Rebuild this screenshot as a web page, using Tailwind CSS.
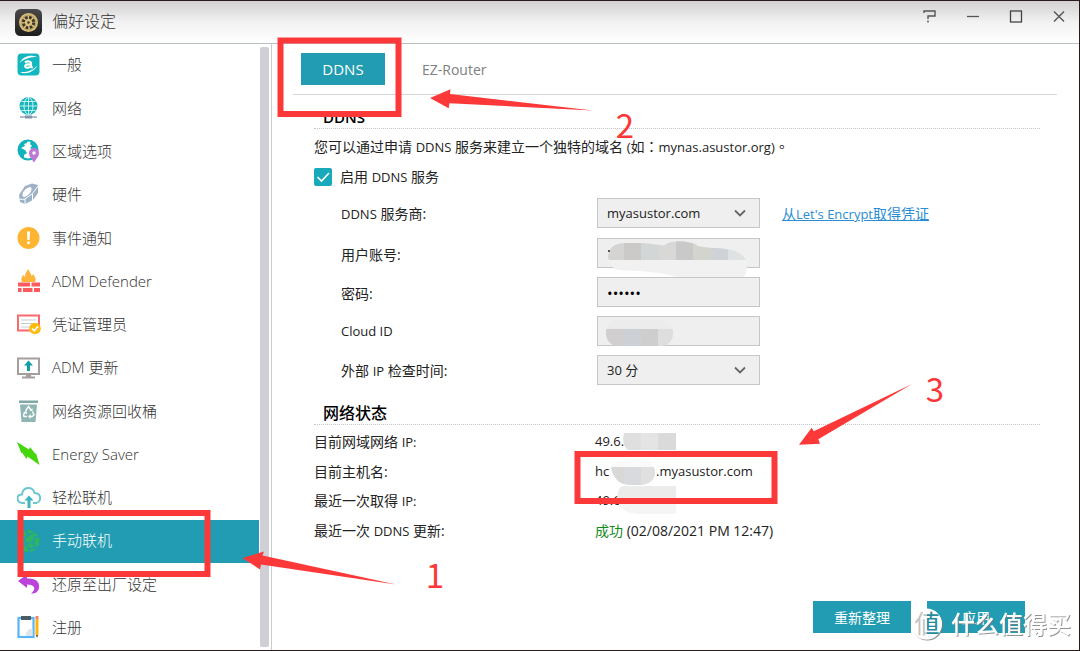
<!DOCTYPE html>
<html lang="zh-CN">
<head>
<meta charset="utf-8">
<title>偏好设定</title>
<script src="https://cdn.jsdelivr.net/npm/@tailwindcss/browser@4"></script>
</head>
<body class="relative flex min-h-screen flex-col border-t border-r border-b border-[#2a1a1c] bg-white font-['Open_Sans','Noto_Sans_CJK_SC',sans-serif] text-[14px] text-[#222]">

<header class="flex h-[43px] shrink-0 items-center border-b border-[#b9c0c3] bg-linear-to-b from-[#d2d0d1] via-[#f3f2f2] to-white pl-[15px]">
  <svg class="h-[27px] w-[27px]" viewBox="0 0 27 27">
    <defs><linearGradient id="dk" x1="0" y1="0" x2="0" y2="1"><stop offset="0" stop-color="#4a4a4a"/><stop offset="1" stop-color="#1d1d1d"/></linearGradient></defs>
    <rect width="27" height="27" rx="5.500" fill="url(#dk)"/>
    <circle cx="13.500" cy="13.500" r="9.500" fill="#d9bf7b"/>
    <circle cx="13.500" cy="13.500" r="5.200" fill="none" stroke="#3a342a" stroke-width="3" stroke-dasharray="2.600 1.480"/>
    <circle cx="13.500" cy="13.500" r="7.500" fill="none" stroke="#8d7c50" stroke-width=".5"/>
    <circle cx="13.500" cy="13.500" r="1.200" fill="#3a342a"/>
  </svg>
  <h1 class="ml-[10px] flex-1 pb-0.5 text-[16px] font-light text-[#333]">偏好设定</h1>
  <div class="mr-[13px] mb-3 flex gap-[29px]">
    <button type="button" aria-label="帮助"><svg class="h-[14px] w-[14px]" viewBox="0 0 14 14" fill="none" stroke="#555" stroke-width="1.400"><path d="M1 4V2H12V7H5V10M5 11.500V13.500"/></svg></button>
    <button type="button" aria-label="最小化"><svg class="h-[14px] w-[14px]" viewBox="0 0 14 14" stroke="#555" stroke-width="1.300"><path d="M1 7.500H13"/></svg></button>
    <button type="button" aria-label="最大化"><svg class="h-[14px] w-[14px]" viewBox="0 0 14 14" fill="none" stroke="#444" stroke-width="1.300"><rect x="1.500" y="2" width="11" height="11"/></svg></button>
    <button type="button" aria-label="关闭"><svg class="h-[14px] w-[14px]" viewBox="0 0 14 14" stroke="#555" stroke-width="1.400"><path d="M2 2.500L12 12.500M12 2.500L2 12.500"/></svg></button>
  </div>
</header>

<div class="flex flex-1">
  <nav class="flex w-[259px] shrink-0 flex-col text-[15px] font-light text-[#333]">
    <a href="#" class="flex flex-1 items-center gap-[11px] pb-0.5 pl-[17px]"><svg class="h-6 w-6" viewBox="0 0 24 24"><rect x=".5" y=".5" width="22" height="22" rx="4" fill="#12b7c0"/><path d="M2.500 10C6 3 14 1 20 4C14 4 8 5 2.500 10ZM20.500 12.500C17 19 9 22 3 19C10 19.500 15 18 20.500 12.500Z" fill="#fff"/><path d="M8 9.500C10 8 14 8 14 10.500V13.500L15.500 15M13.500 11.500C9 11 7.500 12.500 8.500 14C9.500 15.500 13 14.500 14 13" fill="none" stroke="#fff" stroke-width="2.200"/></svg>一般</a>
    <a href="#" class="flex flex-1 items-center gap-[11px] pb-0.5 pl-[17px]"><svg class="h-6 w-6" viewBox="0 0 24 24"><circle cx="11.500" cy="10" r="9" fill="#15b5bd"/><g fill="none" stroke="#d7f5f6" stroke-width=".9"><ellipse cx="11.500" cy="10" rx="4.500" ry="8.500"/><path d="M11.500 1V19M3 10H20M4.500 5.500H18.500M4.500 14.500H18.500"/></g><path d="M3 21H20" stroke="#8fa0b4" stroke-width="1.400"/><path d="M8 19.500H15V22.500H8Z" fill="#8494aa"/></svg>网络</a>
    <a href="#" class="flex flex-1 items-center gap-[11px] pb-0.5 pl-[17px]"><svg class="h-6 w-6" viewBox="0 0 24 24"><circle cx="11" cy="11" r="9.500" fill="#fff" stroke="#12b3bb" stroke-width="2"/><path d="M2 7C4 3 7 1 11 1L10 4L7 5L8 7L4 9L8 11L10 14L7 16V20C3 17 1 12 2 7ZM14 2C18 3 20 6 21 10L17 11L13 9L15 7L13 5Z" fill="#12b3bb"/><path d="M17 23.500C14 19 12 17 12 14A5 5 0 0 1 22 14C22 17 20 19 17 23.500Z" fill="#bd79d3"/><circle cx="17" cy="14" r="1.700" fill="#fff"/></svg>区域选项</a>
    <a href="#" class="flex flex-1 items-center gap-[11px] pb-0.5 pl-[17px]"><svg class="h-6 w-6" viewBox="0 0 24 24"><path d="M2 13L8 4L15 1.500L21 3V11L16 18L8 22L3 20Z" fill="#9db2c7"/><ellipse cx="10" cy="10" rx="6" ry="3" transform="rotate(-48 10 10)" fill="#fff"/><path d="M2.500 17.500L8 17L15.500 11.500L21 4M8 17V22.500M15.500 11.500V18.500" fill="none" stroke="#fff" stroke-width="1"/></svg>硬件</a>
    <a href="#" class="flex flex-1 items-center gap-[11px] pb-0.5 pl-[17px]"><svg class="h-6 w-6" viewBox="0 0 24 24"><circle cx="11.500" cy="12" r="11" fill="#ffb432"/><path d="M10 5.500H13L12.600 14H10.400Z" fill="#fff"/><circle cx="11.500" cy="16.800" r="1.500" fill="#fff"/></svg>事件通知</a>
    <a href="#" class="flex flex-1 items-center gap-[11px] pb-0.5 pl-[17px]"><svg class="h-6 w-6" viewBox="0 0 24 24"><path d="M5 13C3.500 10 5 8 6 6L8 8C8 5 9 3 11.500 0C12 3 14 4 14.500 7L16.500 5C17 8 20 9 18 13Z" fill="#ffb43a"/><path d="M1 13.500H13V17.500H1ZM14.500 13.500H23V17.500H14.500ZM1 19H4.500V23H1ZM6 19H15.500V23H6ZM17 19H23V23H17Z" fill="#fb5a5e"/></svg>ADM Defender</a>
    <a href="#" class="flex flex-1 items-center gap-[11px] pb-0.5 pl-[17px]"><svg class="h-6 w-6" viewBox="0 0 24 24"><rect x="1" y="3.500" width="21" height="15" fill="#fff" stroke="#f96a6c" stroke-width="2"/><path d="M4 8H19M4 11.500H16M4 15H13" stroke="#c8cbd0" stroke-width="1.200"/><circle cx="18" cy="16.500" r="5.800" fill="#fdbb0c"/><path d="M15 16.500L17.300 18.800L21 14.500" fill="none" stroke="#fff" stroke-width="1.700"/></svg>凭证管理员</a>
    <a href="#" class="flex flex-1 items-center gap-[11px] pb-0.5 pl-[17px]"><svg class="h-6 w-6" viewBox="0 0 24 24"><rect x="1" y="2.500" width="21" height="15.500" fill="#fff" stroke="#a59e9c" stroke-width="2"/><path d="M9 18H14V20.500H18V22.500H5V20.500H9Z" fill="#a59e9c"/><path d="M11.500 4.500L16 9.500H13V15H10V9.500H7Z" fill="#109da3"/></svg>ADM 更新</a>
    <a href="#" class="flex flex-1 items-center gap-[11px] pb-0.5 pl-[17px]"><svg class="h-6 w-6" viewBox="0 0 24 24"><path d="M2 1.500H21V4H2Z" fill="#7fa7a4"/><path d="M3 5.500H20L18.500 23H4.500Z" fill="#8fb6b2"/><path d="M8.500 12L11.500 7.500L14 11M15.500 12.500L17 16L15 17.500H12.500M10 17.500H7L6.500 16L8 13" fill="none" stroke="#fff" stroke-width="1.400"/><path d="M12.500 12H15.500V9ZM13.500 15V20L11 17.500ZM6 13.500L9.500 12L10 15Z" fill="#fff"/></svg>网络资源回收桶</a>
    <a href="#" class="flex flex-1 items-center gap-[11px] pb-0.5 pl-[17px]"><svg class="h-6 w-6" viewBox="0 0 24 24"><path d="M0 0L12 7.500L13 5L18.500 12L19 11L22.500 23L10.500 14.500L9.500 17L5 10.500L4.500 11.500Z" fill="#45d60b"/></svg>Energy Saver</a>
    <a href="#" class="flex flex-1 items-center gap-[11px] pb-0.5 pl-[17px]"><svg class="h-6 w-6" viewBox="0 0 24 24" fill="none"><path d="M8 18H5C-1 17 -1 9.500 5 9.500C6 1 16 1 17.500 8C24.500 8 25 17 19 18H16" stroke="#6cc6cf" stroke-width="2"/><path d="M12 23V13" stroke="#3bb5bf" stroke-width="3"/><path d="M7.500 15.500L12 10.500L16.500 15.500Z" fill="#3bb5bf"/></svg>轻松联机</a>
    <a href="#" aria-current="page" class="flex flex-1 items-center gap-[11px] bg-[#219cb2] pb-0.5 pl-[17px] text-white"><svg class="h-6 w-6" viewBox="0 0 24 24"><circle cx="11.500" cy="12" r="11" fill="#2db563"/><path d="M8 1L12 6L18 3M12 6L7 9L2 6M7 9L9 15L3 19M9 15L16 13L18 8L23 7M16 13L18 19L23 17M9 15L12 20L18 19M12 20V24" fill="none" stroke="#219cb2" stroke-width="1.500"/></svg>手动联机</a>
    <a href="#" class="flex flex-1 items-center gap-[11px] pb-0.5 pl-[17px]"><svg class="h-6 w-6" viewBox="0 0 24 24"><path d="M1 9L10 2.500V6.500C19 6 23 10 22 16C21 20 18 22 14 21.500C19 18 19 12.500 10 12.500V16Z" fill="#bb43dc"/></svg>还原至出厂设定</a>
    <a href="#" class="flex flex-1 items-center gap-[11px] pb-0.5 pl-[17px]"><svg class="h-6 w-6" viewBox="0 0 24 24"><rect x="1.500" y="3" width="15" height="19" fill="#fff" stroke="#5ab4fa" stroke-width="2.200"/><path d="M4 1H14V5H4Z" fill="#4d5d66"/><path d="M9 18L12 14H15.500V21H9Z" fill="#dfe6eb"/><path d="M18.500 4H21.500V19L20 22.500L18.500 19Z" fill="#fdb50b"/><path d="M18.500 1H21.500V4H18.500Z" fill="#e8875f"/><path d="M19 20H21L20 23Z" fill="#574a42"/></svg>注册</a>
  </nav>
  <div class="my-[3px] ml-px w-[9px] shrink-0 rounded-xs bg-[#cfcfd5]"></div>

  <main class="ml-[2px] flex min-w-0 flex-1 flex-col border-l border-[#c9cdd0]">
    <div role="tablist" class="mr-[22px] ml-[21px] flex border-b border-[#d4d7da] px-2 py-[9px] text-[15px]">
      <button type="button" role="tab" aria-selected="true" class="h-8 w-[84px] bg-[#219cb2] text-white">DDNS</button>
      <button type="button" role="tab" aria-selected="false" class="ml-4 px-[21px] text-[14px] text-[#808080]">EZ-Router</button>
    </div>

    <form class="flex flex-1 flex-col pl-[42px]">
      <section class="mr-[39px]">
        <h2 class="border-b border-dotted border-[#c3c5cc] pt-3 pl-[9px] text-[15px] leading-[21px] font-semibold text-black">DDNS</h2>
        <p class="mt-[6px] leading-[22px] whitespace-nowrap">您可以通过申请 <span class="text-[13px]">DDNS</span> 服务来建立一个独特的域名 <span class="text-[13px]">(</span>如<span lang="zh-TW" class="font-['Noto_Sans_CJK_TC',sans-serif]">：</span><span class="text-[13px]">mynas.asustor.org)</span><span lang="zh-TW" class="font-['Noto_Sans_CJK_TC',sans-serif]">。</span></p>
        <div class="mt-2 flex h-[22px] items-center">
          <span class="relative h-[18px] w-[18px]"><input id="enable" type="checkbox" checked class="block h-[18px] w-[18px] appearance-none rounded-xs bg-[#18a9bb]"><svg class="pointer-events-none absolute inset-0" viewBox="0 0 18 18" fill="none" stroke="#fff" stroke-width="1.600"><path d="M3.500 9L7.500 13L15 5"/></svg></span>
          <label for="enable" class="ml-2">启用 <span class="text-[13px]">DDNS</span> 服务</label>
        </div>

        <div class="mt-[10px] grid grid-cols-[256px_163px_1fr] items-center gap-y-[9px] pl-[27px]">
          <label for="provider" class="pt-0.5"><span class="text-[13px]">DDNS</span> 服务商:</label>
          <div class="relative"><select id="provider" class="block h-[30px] w-full appearance-none border border-[#c6c6c6] bg-[#efefef] px-[9px] pt-0.5 text-[13px]"><option>myasustor.com</option></select><svg class="pointer-events-none absolute top-[9px] right-[14px] h-3 w-3" viewBox="0 0 12 12" fill="none" stroke="#666" stroke-width="1.800"><path d="M1 3.500L6 8.500L11 3.500"/></svg></div>
          <a href="#" class="ml-[22px] pt-0.5 text-[#2a8cd2] underline">从<span class="text-[13px]">Let's Encrypt</span>取得凭证</a>

          <label for="account" class="mt-px pt-0.5">用户账号:</label>
          <input id="account" type="text" class="mt-px h-[30px] w-full border border-[#c6c6c6] bg-[#efefef] px-[9px] text-[13px]"><i></i>

          <label for="pw" class="pt-0.5">密码:</label>
          <input id="pw" type="password" value="123456" class="h-[30px] w-full border border-[#c6c6c6] bg-[#efefef] px-[9px] pt-0.5 text-[15px] text-black"><i></i>

          <label for="cloud" class="pt-0.5 text-[13px]">Cloud ID</label>
          <input id="cloud" type="text" class="h-[30px] w-full border border-[#c6c6c6] bg-[#efefef] px-[9px] text-[13px]"><i></i>

          <label for="interval" class="pt-0.5">外部 <span class="text-[13px]">IP</span> 检查时间:</label>
          <div class="relative"><select id="interval" class="block h-[30px] w-full appearance-none border border-[#c6c6c6] bg-[#efefef] px-[9px] pt-0.5 text-[13px]"><option>30 分</option></select><svg class="pointer-events-none absolute top-[9px] right-[14px] h-3 w-3" viewBox="0 0 12 12" fill="none" stroke="#666" stroke-width="1.800"><path d="M1 3.500L6 8.500L11 3.500"/></svg></div>
        </div>
      </section>

      <section class="mt-[18px] mr-[39px]">
        <h2 class="border-b border-dotted border-[#c3c5cc] pl-[9px] text-[16px] leading-[21px] font-medium text-black">网络状态</h2>
        <dl class="mt-0.5 grid grid-cols-[281px_1fr] leading-[29px]">
          <dt>目前网域网络 <span class="text-[13px]">IP:</span></dt><dd class="text-[13px]">49.6.</dd>
          <dt>目前主机名:</dt><dd class="flex text-[13px]"><span class="w-[61px]">hc</span>.myasustor.com</dd>
          <dt>最近一次取得 <span class="text-[13px]">IP:</span></dt><dd class="text-[13px]">49.6</dd>
          <dt>最近一次 <span class="text-[13px]">DDNS</span> 更新:</dt><dd><span class="text-[#128a1c]">成功</span> (02/08/2021 PM 12:47)</dd>
        </dl>
      </section>

      <div class="mt-auto mr-[54px] mb-[17px] flex justify-end gap-4 text-white">
        <button type="button" class="h-8 w-[98px] bg-[#219cb2]">重新整理</button>
        <button type="submit" class="h-8 w-[98px] bg-[#219cb2]">应用</button>
      </div>
    </form>
  </main>
</div>

<!-- Annotations, masked values and watermark, laid over the window -->
<svg class="pointer-events-none absolute -top-px left-0 h-[651px] w-[1080px]" viewBox="0 0 1080 651">
  <defs>
    <clipPath id="m1"><path d="M608 257C609 247 615 243 625 243H640C650 243 660 246 665 245C670 240 690 240 698 246C715 250 740 245 746 261C748 268 746 277 743 277H676C660 272 640 271 618 270C612 269 609 262 608 257Z"/></clipPath>
    <clipPath id="m2"><rect x="606" y="320" width="67" height="26" rx="12"/></clipPath>
    <clipPath id="m3"><path d="M611 466C620 458 640 458 648 460C659 468 658 484 640 485H630C618 485 612 476 611 466Z"/></clipPath>
    <clipPath id="m4"><path d="M622 486H676V514H640C612 514 615 490 622 486Z"/></clipPath>
    <linearGradient id="wm" x1="914" x2="939" y1="0" y2="0" gradientUnits="userSpaceOnUse"><stop offset=".5" stop-color="#c4c4c4"/><stop offset=".54" stop-color="#26899c"/></linearGradient>
    <filter id="sh" x="-20%" y="-20%" width="140%" height="150%"><feDropShadow dx="1" dy="1" stdDeviation=".6" flood-color="#777" flood-opacity=".8"/></filter>
  </defs>
  <g clip-path="url(#m1)"><path d="M600 236H750V280H600Z" fill="#f1f1f1"/><path d="M606 236H624V260H606Z" fill="#d5d4d3"/><path d="M624 236H641V260H624Z" fill="#cbcac8"/><path d="M641 236H659V260H641Z" fill="#d3d6d6"/><path d="M659 236H676V260H659Z" fill="#d8d8d6"/><path d="M676 236H693V260H676Z" fill="#cac9c9"/><path d="M693 236H711V260H693Z" fill="#d3d4ce"/><path d="M711 236H728V260H711Z" fill="#cfd2d6"/><path d="M728 236H750V260H728Z" fill="#dfe2e2"/></g>
  <path d="M608 250H610V252H608Z" fill="#555"/>
  <g clip-path="url(#m2)"><path d="M606 320H673V329H606Z" fill="#ececed"/><path d="M606 329H624V346H606Z" fill="#d1cfcf"/><path d="M624 329H641V346H624Z" fill="#cdd0d4"/><path d="M641 329H658V346H641Z" fill="#cecece"/><path d="M658 329H673V346H658Z" fill="#dedede"/></g>
  <path d="M624 433H641V450H628C624 447 622 441 624 433Z" fill="#dfdfdf"/><path d="M641 433H658V450H641Z" fill="#e4e4e4"/><path d="M658 433H676V450H658Z" fill="#dadada"/>
  <g clip-path="url(#m3)"><path d="M606 455H660V467H606Z" fill="#fafafa"/><path d="M606 467H624V486H606Z" fill="#d8d8d8"/><path d="M624 467H641V486H624Z" fill="#d9dadd"/><path d="M641 467H660V486H641Z" fill="#e0e0e0"/></g>
  <g clip-path="url(#m4)"><path d="M610 486H676V498H610Z" fill="#ececea"/><path d="M610 498H676V514H610Z" fill="#f5f5f5"/></g>

  <g fill="none" stroke="#fd3838" stroke-width="6">
    <rect x="20.500" y="513" width="187" height="61"/>
    <rect x="280.500" y="40.500" width="118" height="73.500"/>
    <rect x="577.500" y="454" width="197" height="47"/>
  </g>
  <g fill="#fd3838">
    <path d="M242.500 558L264 551.500L262.500 555.500L396 584.500L261 564.500L260 569.500Z"/>
    <path d="M430 98L450.500 89.300L450 94L593 110.500L449.500 103.300L448.700 108.300Z"/>
    <path d="M799 444.700L811.700 427.700L813.700 431.300L912 384L818.300 439.300L820 443.700Z"/>
    <g font-family="Noto Sans CJK SC, sans-serif" font-size="33" font-weight="400" text-anchor="middle"><text x="435" y="588">1</text><text x="625" y="138">2</text><text x="935" y="402">3</text></g>
  </g>

  <circle cx="926.500" cy="624" r="15.500" fill="#fff" filter="url(#sh)"/>
  <text x="927" y="633" text-anchor="middle" font-family="Noto Sans CJK TC, sans-serif" font-size="25" fill="url(#wm)">値</text>
  <text x="951" y="633" font-family="Noto Sans CJK SC, sans-serif" font-size="24" font-weight="500" fill="#fff" filter="url(#sh)">什么值得买</text>
</svg>
</body>
</html>
